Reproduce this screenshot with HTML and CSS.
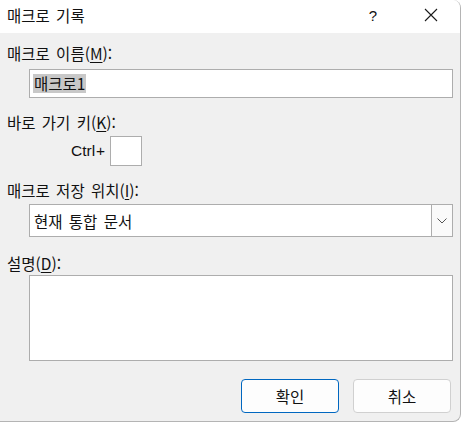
FILE: index.html
```html
<!DOCTYPE html>
<html lang="ko">
<head>
<meta charset="utf-8">
<link rel="stylesheet" href="styles.css">
</head>
<body>
<div class="window">
  <div class="titlebar">
    <span class="title">매크로 기록</span>
    <span class="help">?</span>
    <span class="close">
      <svg width="14" height="14" viewBox="0 0 14 14"><path d="M1 1L13 13M13 1L1 13" stroke="#1a1a1a" stroke-width="1.1" fill="none"/></svg>
    </span>
  </div>
  <div class="content">
    <div class="label l1">매크로 이름(<u>M</u>):</div>
    <div class="field input1"><span class="sel">매크로1</span></div>
    <div class="label l2">바로 가기 키(<u>K</u>):</div>
    <div class="ctrl-row">
      <span class="ctrl">Ctrl<span class="plus">+</span></span>
      <span class="keybox"></span>
    </div>
    <div class="label l3">매크로 저장 위치(<u>I</u>):</div>
    <div class="field select">
      <span class="sel-text">현재 통합 문서</span>
      <span class="drop">
        <svg width="10" height="6" viewBox="0 0 10 6"><path d="M0.5 0.5L5 5L9.5 0.5" stroke="#555" stroke-width="1" fill="none"/></svg>
      </span>
    </div>
    <div class="label l4">설명(<u>D</u>):</div>
    <div class="field textarea"></div>
    <div class="buttons">
      <button class="btn primary">확인</button>
      <button class="btn">취소</button>
    </div>
  </div>
</div>
</body>
</html>
```
FILE: styles.css
```css
html, body {
  margin: 0;
  padding: 0;
  background: #ffffff;
}
body {
  font-family: "Noto Sans CJK KR", "Noto Sans", sans-serif;
  font-size: 15.5px;
  word-spacing: 2px;
  color: #111;
}
.window {
  width: 460px;
  height: 421px;
  border-right: 1px solid #b4b4b4;
  border-bottom: 1px solid #b4b4b4;
  border-radius: 0 8px 8px 0;
  overflow: hidden;
  display: flex;
  flex-direction: column;
  background: #f0f0f0;
}
.titlebar {
  height: 33px;
  background: #ffffff;
  display: flex;
  align-items: center;
  padding-left: 7px;
  flex-shrink: 0;
}
.title {
  line-height: 20px;
  margin-top: -3px;
}
.help {
  margin-left: auto;
  margin-right: 47px;
  font-family: "Liberation Sans", sans-serif;
  font-size: 15px;
  margin-top: -3px;
}
.close {
  display: flex;
  margin-right: 22px;
  margin-top: -3px;
}
.content {
  display: flex;
  flex-direction: column;
  padding: 10px 0 0 7px;
}
.label {
  line-height: 20px;
  height: 20px;
}
u {
  text-underline-offset: 2px;
}
.field {
  margin-left: 22px;
  width: 422px;
  background: #fff;
  border: 1px solid #adadad;
}
.input1 {
  margin-top: 6px;
  height: 27px;
  display: flex;
  align-items: center;
  padding-left: 3px;
  box-sizing: content-box;
  width: 419px;
}
.sel {
  background: #c8c8c8;
  line-height: 19px;
  padding: 0 1px;
}
.l2 { margin-top: 14px; }
.ctrl-row {
  margin-top: 4px;
  display: flex;
  align-items: center;
  padding-left: 64px;
  height: 30px;
}
.ctrl {
  font-family: "Liberation Sans", sans-serif;
  font-size: 15.5px;
  font-weight: 400;
  word-spacing: 0;
}
.plus {
  margin-left: 1px;
}
.keybox {
  margin-left: 5px;
  width: 30px;
  height: 28px;
  background: #fff;
  border: 1px solid #adadad;
}
.l3 { margin-top: 14px; }
.select {
  margin-top: 4px;
  height: 31px;
  display: flex;
  align-items: center;
}
.sel-text {
  padding-left: 4px;
  flex: 1;
}
.drop {
  width: 20px;
  height: 31px;
  border-left: 1px solid #adadad;
  display: flex;
  align-items: center;
  justify-content: center;
  background: #fafafa;
}
.l4 { margin-top: 16px; }
.textarea {
  margin-top: 2px;
  height: 84px;
}
.buttons {
  margin-top: 18px;
  display: flex;
  gap: 14px;
  padding-left: 234px;
}
.btn {
  width: 98px;
  height: 34px;
  border: 1px solid #d0d0d0;
  border-radius: 4px;
  background: #fdfdfd;
  font-family: inherit;
  font-size: 15.5px;
  color: #111;
  padding: 0;
}
.btn.primary {
  border-color: #0067c0;
}
```
